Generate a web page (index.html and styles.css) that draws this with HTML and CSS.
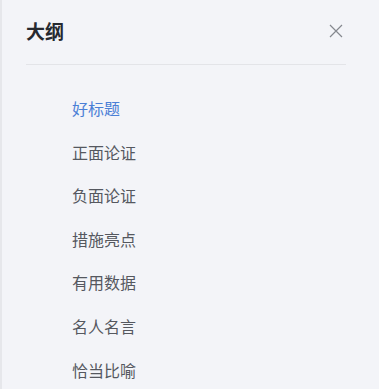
FILE: index.html
```html
<!DOCTYPE html>
<html lang="zh">
<head>
<meta charset="utf-8">
<link rel="stylesheet" href="styles.css">
</head>
<body>
<aside class="panel">
  <header class="head">
    <h2 class="title">大纲</h2>
    <button class="close" aria-label="关闭">
      <svg width="14" height="14" viewBox="0 0 14 14"><path d="M1 1L13 13M13 1L1 13" stroke="#85888e" stroke-width="1.2" fill="none"/></svg>
    </button>
  </header>
  <ul class="list">
    <li class="item active">好标题</li>
    <li class="item">正面论证</li>
    <li class="item">负面论证</li>
    <li class="item">措施亮点</li>
    <li class="item">有用数据</li>
    <li class="item">名人名言</li>
    <li class="item">恰当比喻</li>
  </ul>
</aside>
</body>
</html>
```
FILE: styles.css
```css
html, body { margin: 0; padding: 0; }
body {
  width: 379px;
  height: 389px;
  overflow: hidden;
  background: #f3f4f8;
  font-family: "Noto Sans CJK SC", "Noto Sans", sans-serif;
}
.panel {
  box-sizing: border-box;
  height: 389px;
  border-left: 2px solid #e6e7eb;
  padding: 0 33px 0 24px;
}
.head {
  display: flex;
  align-items: center;
  justify-content: space-between;
  height: 64px;
  border-bottom: 1px solid #e3e4e8;
}
.title {
  margin: 0 0 3px;
  font-size: 19px;
  font-weight: 700;
  color: #26292f;
  line-height: 1;
}
.close {
  border: 0;
  background: none;
  padding: 0;
  margin: 0 3px 3px 0;
  display: flex;
}
.list {
  list-style: none;
  margin: 0;
  padding: 22px 0 0 46px;
}
.item {
  height: 43.6px;
  line-height: 43.6px;
  font-size: 16px;
  color: #55585f;
}
.item.active { color: #4b7fd6; }
```
